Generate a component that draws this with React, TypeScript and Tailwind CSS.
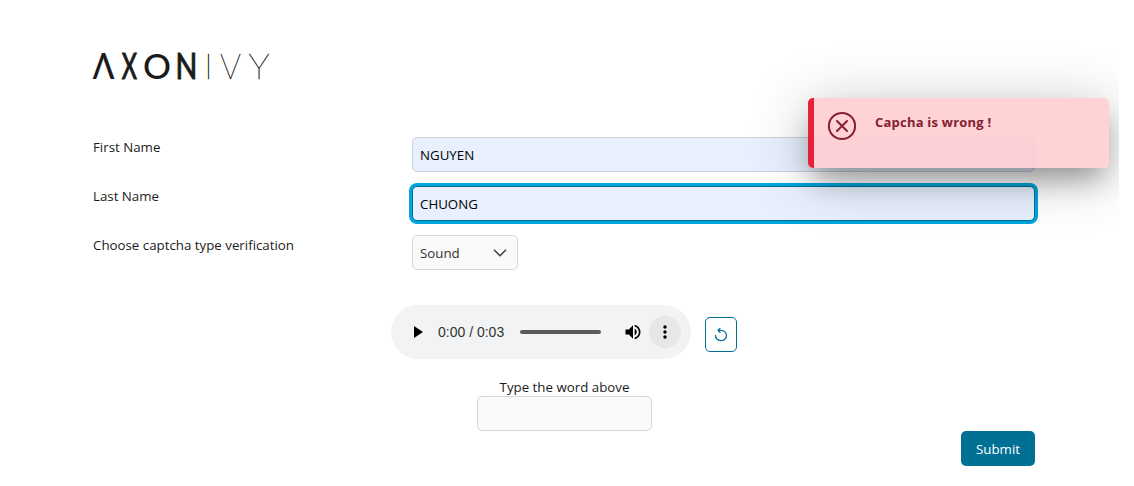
import React from "react";

function Logo() {
  return (
    <svg className="block overflow-visible font-['Lato','Open_Sans',sans-serif]" width="178" height="30" viewBox="92 51 178 30" fill="#1a1a1a" aria-label="Axon Ivy">
      <g fontSize="35.8" fontWeight="500" stroke="#1a1a1a">
        <text x="92.8" y="79" textLength="21.6" lengthAdjust="spacingAndGlyphs" strokeWidth="0.2">Λ</text>
        <text transform="translate(121.8 79) scale(0.65 1)" strokeWidth="0.9">X</text>
        <text x="143" y="78.7" fontSize="35" textLength="28" lengthAdjust="spacingAndGlyphs" strokeWidth="0">O</text>
        <text x="175.5" y="79" textLength="21.8" lengthAdjust="spacingAndGlyphs" strokeWidth="0.9">N</text>
      </g>
      <g fontSize="36.2" fontWeight="100" stroke="#1a1a1a" strokeWidth="0.4">
        <text x="204" y="79">I</text>
        <text x="220" y="79" textLength="21" lengthAdjust="spacingAndGlyphs">V</text>
        <text x="248.5" y="79" textLength="21" lengthAdjust="spacingAndGlyphs">Y</text>
      </g>
    </svg>
  );
}

function Row({ label, children }: { label: string; children: React.ReactNode }) {
  return (
    <div className="flex h-[35px] items-start">
      <label className="w-[319px] shrink-0 pt-px leading-[19px]">{label}</label>
      {children}
    </div>
  );
}

function AudioPlayer() {
  return (
    <div className="flex h-[54px] w-[300px] items-center rounded-full bg-[#f1f3f4] pl-[22px] pr-[10px]">
      <svg className="translate-x-px" width="9" height="12" viewBox="0 0 9 12"><path d="M0 0V12L9 6Z" fill="#000" /></svg>
      <span className="ml-4 w-[73px] shrink-0 font-['Liberation_Sans',sans-serif] text-[14px] text-[#333]">0:00 / 0:03</span>
      <span className="ml-[9px] h-1 w-[81px] shrink-0 rounded-full bg-[#5a5a5a]" />
      <svg className="ml-[22px] shrink-0" width="20" height="20" viewBox="0 0 24 24" fill="#000">
        <path d="M3 9v6h4l5 5V4L7 9H3zm13.5 3c0-1.77-1.02-3.29-2.5-4.03v8.05c1.48-.73 2.5-2.25 2.5-4.02zM14 3.23v2.06c2.89.86 5 3.54 5 6.71s-2.11 5.85-5 6.71v2.06c4.01-.91 7-4.49 7-8.77s-2.99-7.86-7-8.77z" />
      </svg>
      <span className="ml-[6px] flex size-8 shrink-0 items-center justify-center rounded-full bg-[#e6e7e8]">
        <svg width="20" height="20" viewBox="0 0 24 24" fill="#000">
          <path d="M12 8c1.1 0 2-.9 2-2s-.9-2-2-2-2 .9-2 2 .9 2 2 2zm0 2c-1.1 0-2 .9-2 2s.9 2 2 2 2-.9 2-2-.9-2-2-2zm0 6c-1.1 0-2 .9-2 2s.9 2 2 2 2-.9 2-2-.9-2-2-2z" />
        </svg>
      </span>
    </div>
  );
}

function Toast() {
  return (
    <div className="pointer-events-none absolute left-0 top-0 h-[486px] w-[1119px] overflow-hidden">
      <div
        role="alert"
        className="absolute left-[808px] top-[98px] flex h-[70px] w-[301px] rounded-[5px] bg-[#ffcdd2]/90 pl-[19px] pt-[13px] text-[#84212e] shadow-[0_16px_28px_-6px_rgba(0,0,0,0.32),0_8px_60px_0px_rgba(0,0,0,0.24)]"
      >
        <span className="absolute inset-y-0 left-0 w-[6px] rounded-l-[5px] bg-[#e8213b]" />
        <svg width="30" height="30" viewBox="0 0 30 30" fill="none" stroke="currentColor" strokeWidth="2" strokeLinecap="round">
          <circle cx="15" cy="15" r="13.1" />
          <path d="M10 10L20 20M20 10L10 20" />
        </svg>
        <span className="ml-[18px] pt-[2px] text-[13px] font-bold leading-[19px] tracking-[0.22px]">Capcha is wrong !</span>
      </div>
    </div>
  );
}

export default function App() {
  return (
    <main className="relative h-[486px] w-[1134px] overflow-hidden bg-white pl-[92px] pt-[51px] font-['Open_Sans','Noto_Sans',sans-serif] text-[13.3px] text-[#1b1b1b]">
      <Logo />
      <form className="ml-px mt-14 w-[942px]">
        <div className="flex flex-col gap-[14px]">
          <Row label="First Name">
            <div className="flex h-[35px] flex-1 items-center rounded-[5px] border border-[#cdd1d9] bg-[#e8f0fe] px-[7px] pt-[2px] text-black">NGUYEN</div>
          </Row>
          <Row label="Last Name">
            <div className="flex h-[35px] flex-1 items-center rounded-[5px] border border-[#007095] bg-[#e8f0fe] px-[7px] pt-[2px] text-black shadow-[0_0_0_3px_#00a5dc]">CHUONG</div>
          </Row>
          <Row label="Choose captcha type verification">
            <div className="flex h-[35px] w-[106px] items-center justify-between rounded-[5px] border border-[#d5d6d8] bg-[#fafafa] pl-[7px] pr-[10px] text-[#333]">
              <span className="pt-[2px]">Sound</span>
              <svg width="14" height="8" viewBox="0 0 14 8" fill="none" stroke="#444" strokeWidth="1.6" strokeLinecap="round" strokeLinejoin="round"><path d="M1.5 1.2L7 6.8L12.5 1.2" /></svg>
            </div>
          </Row>
        </div>
        <div className="ml-[298px] mt-[35px] flex items-start">
          <AudioPlayer />
          <button type="button" aria-label="Reload" className="ml-[14px] mt-3 flex h-[35px] w-8 items-center justify-center rounded-[5px] border border-[#007095] text-[#007095]">
            <svg width="14" height="16" viewBox="0 0 14 16" fill="none" stroke="currentColor" strokeWidth="1.3" strokeLinecap="round" strokeLinejoin="round">
              <path d="M1.5 8.3A5.5 5.2 0 1 0 7 3.3H4.2M6 1.4L4 3.3L6 5.3" />
            </svg>
          </button>
        </div>
        <div className="ml-[384px] mt-[18px] flex w-[175px] flex-col">
          <label className="h-[19px] whitespace-nowrap pt-px text-center leading-[19px]">Type the word above</label>
          <div className="h-[35px] rounded-[5px] border border-[#d5d6d8] bg-[#fafafa]" />
        </div>
        <div className="flex justify-end">
          <button type="button" className="flex h-[35px] w-[74px] items-center justify-center rounded-[5px] bg-[#007095] pt-[2px] text-white">Submit</button>
        </div>
      </form>
      <Toast />
    </main>
  );
}
